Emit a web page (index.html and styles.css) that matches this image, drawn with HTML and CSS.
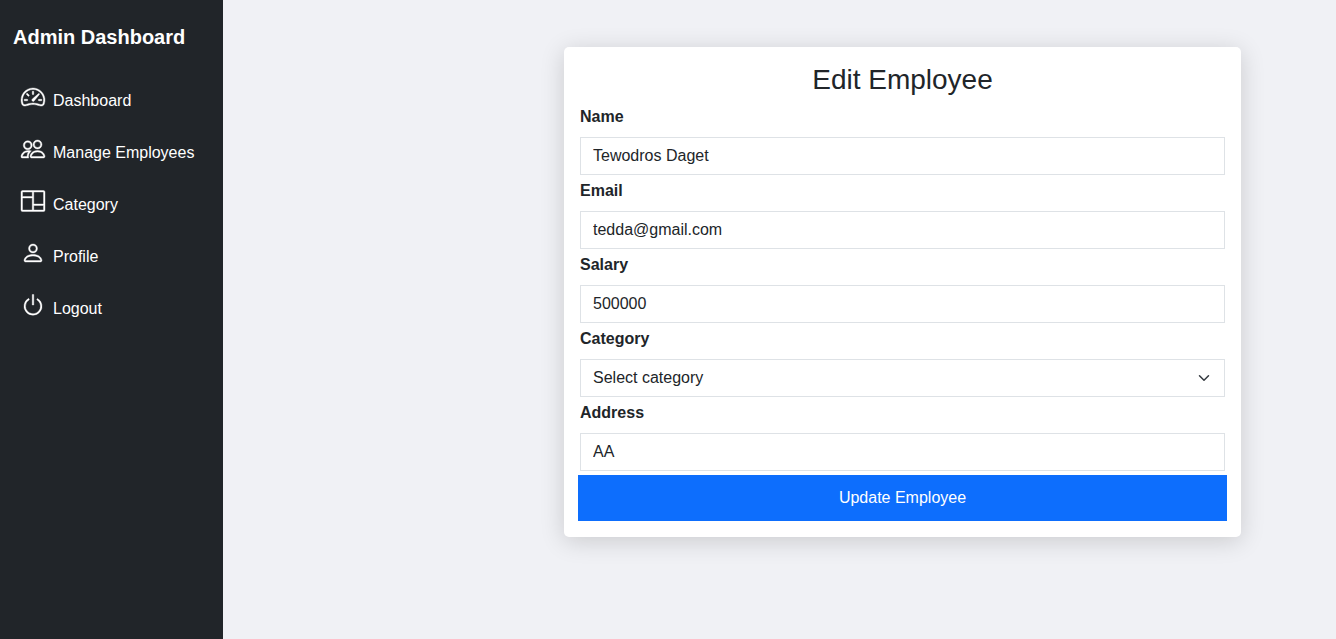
FILE: index.html
```html
<!DOCTYPE html>
<html lang="en">
<head>
<meta charset="utf-8">
<title>Edit Employee</title>
<link rel="stylesheet" href="styles.css">
</head>
<body>
<div class="layout">
  <aside class="sidebar">
    <div class="brand">Admin Dashboard</div>
    <nav class="menu">
      <a class="menu-link"><svg class="icon" viewBox="0 0 16 16"><path d="M8 4a.5.5 0 0 1 .5.5V6a.5.5 0 0 1-1 0V4.5A.5.5 0 0 1 8 4zM3.732 5.732a.5.5 0 0 1 .707 0l.915.914a.5.5 0 1 1-.708.708l-.914-.915a.5.5 0 0 1 0-.707zM2 10a.5.5 0 0 1 .5-.5h1.586a.5.5 0 0 1 0 1H2.5A.5.5 0 0 1 2 10zm9.5 0a.5.5 0 0 1 .5-.5h1.5a.5.5 0 0 1 0 1H12a.5.5 0 0 1-.5-.5zm.754-4.246a.389.389 0 0 0-.527-.02L7.547 9.31a.91.91 0 1 0 1.302 1.258l3.434-4.297a.389.389 0 0 0-.029-.518z"/><path fill-rule="evenodd" d="M0 10a8 8 0 1 1 15.547 2.661c-.442 1.253-1.845 1.602-2.932 1.25C11.309 13.488 9.475 13 8 13c-1.474 0-3.31.488-4.615.911-1.087.352-2.49.003-2.932-1.25A7.988 7.988 0 0 1 0 10zm8-7a7 7 0 0 0-6.603 9.329c.203.575.923.876 1.68.63C4.397 12.533 6.358 12 8 12s3.604.532 4.923.96c.757.245 1.477-.056 1.68-.631A7 7 0 0 0 8 3z"/></svg><span class="menu-text">Dashboard</span></a>
      <a class="menu-link"><svg class="icon" viewBox="0 0 16 16"><path fill-rule="evenodd" d="M15 14s1 0 1-1-1-4-5-4-5 3-5 4 1 1 1 1h8Zm-7.978-1A.261.261 0 0 1 7 12.996c.001-.264.167-1.03.76-1.72C8.312 10.629 9.282 10 11 10c1.717 0 2.687.63 3.24 1.276.593.69.758 1.457.76 1.72l-.008.002a.274.274 0 0 1-.014.002H7.022ZM11 7a2 2 0 1 0 0-4 2 2 0 0 0 0 4Zm3-2a3 3 0 1 1-6 0 3 3 0 0 1 6 0ZM6.936 9.28a5.88 5.88 0 0 0-1.23-.247A7.35 7.35 0 0 0 5 9c-4 0-5 3-5 4 0 .667.333 1 1 1h4.216A2.238 2.238 0 0 1 5 13c0-1.01.377-2.042 1.09-2.904.243-.294.526-.569.846-.816ZM4.92 10A5.493 5.493 0 0 0 4 13H1c0-.26.164-1.03.76-1.724.545-.636 1.492-1.256 3.16-1.275ZM1.5 5.5a3 3 0 1 1 6 0 3 3 0 0 1-6 0Zm3-2a2 2 0 1 0 0 4 2 2 0 0 0 0-4Z"/></svg><span class="menu-text">Manage Employees</span></a>
      <a class="menu-link"><svg class="icon" viewBox="0 0 16 16"><path d="M0 2a1 1 0 0 1 1-1h14a1 1 0 0 1 1 1v12a1 1 0 0 1-1 1H1a1 1 0 0 1-1-1V2zm8.5 0v8H15V2H8.5zm0 9v3H15v-3H8.5zm-1-9H1v3h6.5V2zM1 14h6.5V6H1v8z"/></svg><span class="menu-text">Category</span></a>
      <a class="menu-link"><svg class="icon" viewBox="0 0 16 16"><path d="M8 8a3 3 0 1 0 0-6 3 3 0 0 0 0 6zm2-3a2 2 0 1 1-4 0 2 2 0 0 1 4 0zm4 8c0 1-1 1-1 1H3s-1 0-1-1 1-4 6-4 6 3 6 4zm-1-.004c-.001-.246-.154-.986-.832-1.664C11.516 10.68 10.289 10 8 10c-2.29 0-3.516.68-4.168 1.332-.678.678-.83 1.418-.832 1.664h10z"/></svg><span class="menu-text">Profile</span></a>
      <a class="menu-link"><svg class="icon" viewBox="0 0 16 16"><path d="M7.5 1v7h1V1h-1z"/><path d="M3 8.812a4.999 4.999 0 0 1 2.578-4.375l-.485-.874A6 6 0 1 0 11 3.616l-.501.865A5 5 0 1 1 3 8.812z"/></svg><span class="menu-text">Logout</span></a>
    </nav>
  </aside>
  <main class="content">
    <section class="card">
      <h3 class="title">Edit Employee</h3>
      <form class="form">
        <div class="field"><label class="label" for="name">Name</label><input class="control" id="name" type="text" value="Tewodros Daget"></div>
        <div class="field"><label class="label" for="email">Email</label><input class="control" id="email" type="email" value="tedda@gmail.com"></div>
        <div class="field"><label class="label" for="salary">Salary</label><input class="control" id="salary" type="text" value="500000"></div>
        <div class="field"><label class="label" for="category">Category</label>
          <div class="control select" id="category"><span>Select category</span><svg class="chevron" viewBox="0 0 16 16"><path d="m2 5 6 6 6-6"/></svg></div></div>
        <div class="field"><label class="label" for="address">Address</label><input class="control" id="address" type="text" value="AA"></div>
        <button class="submit" type="button">Update Employee</button>
      </form>
    </section>
  </main>
</div>
</body>
</html>
```
FILE: styles.css
```css
* { box-sizing: border-box; }
body {
  margin: 0;
  font-family: "Liberation Sans", Arial, sans-serif;
  font-size: 16px;
  line-height: 1.5;
  color: #212529;
  background: #f0f1f5;
}
.layout { display: flex; height: 639px; overflow: hidden; }
.sidebar {
  flex: 0 0 223px;
  padding: 22px 13px 0;
  background: #212529;
  color: #fff;
}
.brand { font-size: 20px; font-weight: 700; line-height: 30px; white-space: nowrap; }
.menu { display: flex; flex-direction: column; gap: 12px; padding-top: 25px; }
.menu-link { display: flex; align-items: center; gap: 8px; height: 40px; padding-left: 8px; }
.icon { flex: none; width: 24px; height: 24px; overflow: visible; fill: currentColor; stroke: currentColor; stroke-width: .25; }
.menu-text { padding-top: 8px; white-space: nowrap; }
.content { flex: 1; padding: 47px 95px 0 341px; }
.card {
  height: 490px;
  padding: 16px;
  background: #fff;
  border-radius: 5px;
  box-shadow: 0 4px 24px rgba(0, 0, 0, .16);
}
.title { margin: 0 0 8px; font-size: 28px; font-weight: 400; line-height: 34px; text-align: center; }
.form { display: flex; flex-direction: column; gap: 4px; }
.field { display: flex; flex-direction: column; gap: 8px; }
.label { height: 24px; font-weight: 700; }
.control {
  width: 100%;
  height: 38px;
  margin: 0;
  padding: 6px 12px;
  border: 1px solid #dee2e6;
  border-radius: 0;
  background: #fff;
  color: #212529;
  font: inherit;
}
.select { display: flex; align-items: center; justify-content: space-between; }
.chevron { width: 16px; height: 12px; fill: none; stroke: #343a40; stroke-width: 2; stroke-linecap: round; stroke-linejoin: round; }
.submit {
  height: 46px;
  margin: 0 -2px;
  border: 0;
  background: #0d6efd;
  color: #fff;
  font: inherit;
}
```
